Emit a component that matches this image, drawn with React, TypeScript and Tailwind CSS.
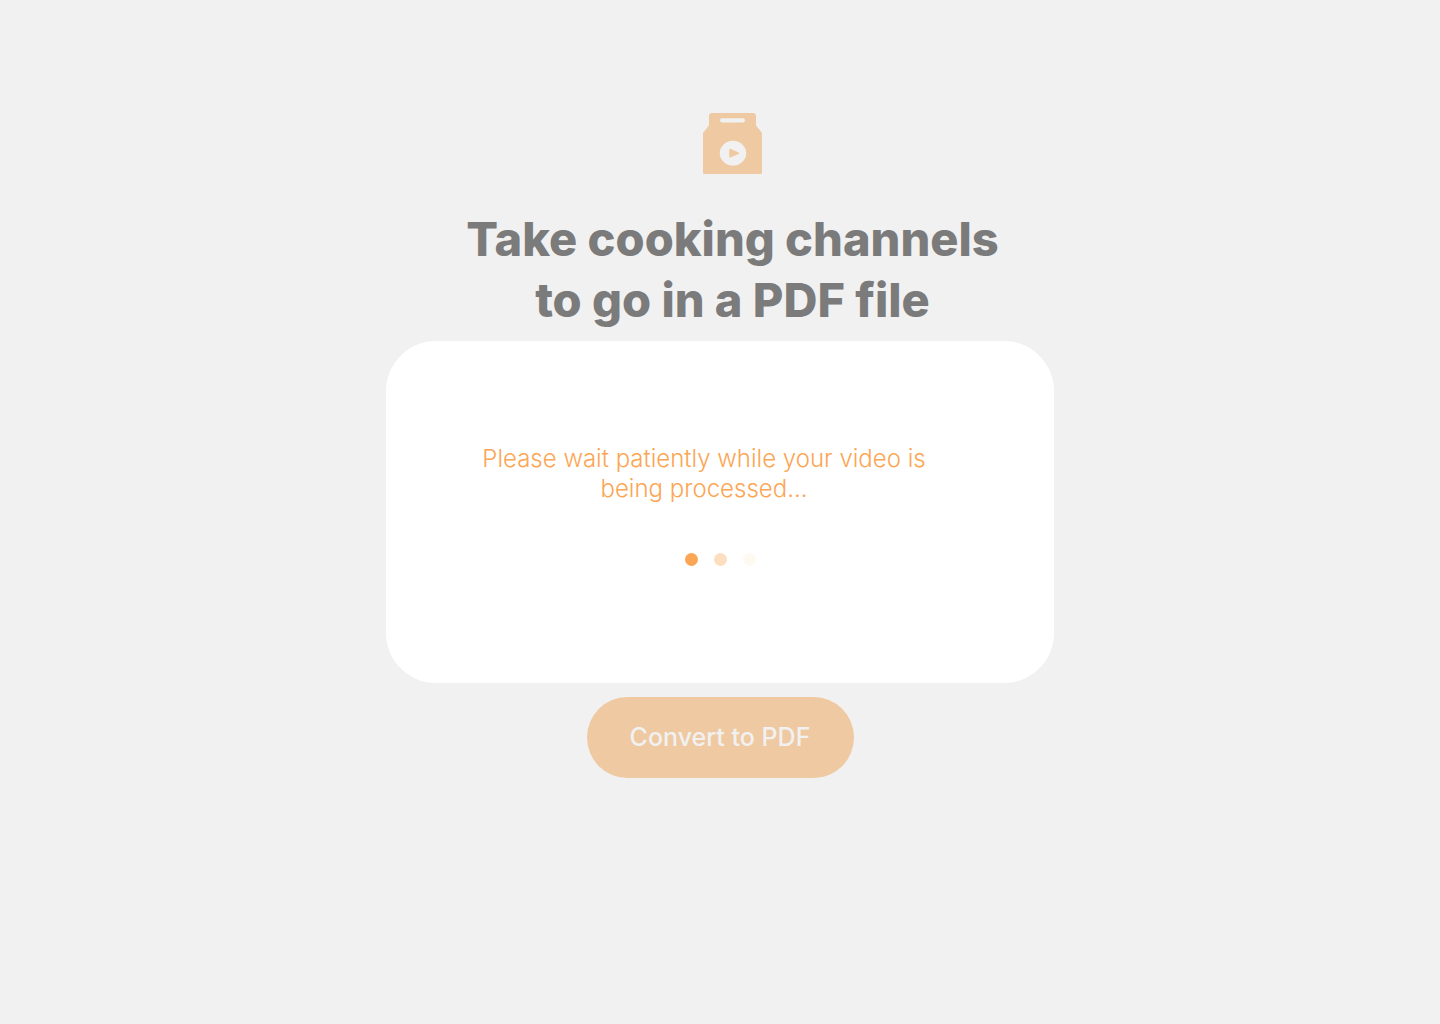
import React from 'react';

const dots = ['bg-[#fba654]', 'bg-[#fddfc0]', 'bg-[#fef9f1]'];

function TakeawayBagIcon() {
  return (
    <svg width="59" height="61" viewBox="0 0 59 61" fill="none" aria-hidden="true">
      <path
        d="M9 0h41q3 0 3 3v9.500l6 7.500v39.500q0 1.500-1.500 1.500h-56Q0 61 0 59.500V20l6-7.500V3q0-3 3-3Z"
        fill="#efc9a2"
      />
      <rect x="17" y="5.200" width="25" height="4.200" rx="2.100" fill="#f1f1f1" />
      <ellipse cx="30" cy="40.200" rx="13.200" ry="12.400" fill="#f1f1f1" />
      <path
        d="M27 36.600v7.200l8.300-3.600Z"
        fill="#efc9a2"
        stroke="#efc9a2"
        strokeWidth="1.600"
        strokeLinejoin="round"
      />
    </svg>
  );
}

function ProcessingCard() {
  return (
    <section
      role="status"
      className="mt-[11px] flex min-h-[342px] w-full max-w-[668px] flex-col items-center rounded-[50px] bg-white px-8 pt-[103px]"
    >
      <p className="pr-8 text-center text-[24px] leading-[30px] font-light text-[#fba654]">
        Please wait patiently while your video is
        <br />
        being processed...
      </p>
      <div className="mt-[49px] flex gap-4">
        {dots.map((color) => (
          <span key={color} className={`size-[13px] rounded-full ${color}`} />
        ))}
      </div>
    </section>
  );
}

export default function App() {
  return (
    <main className="flex min-h-screen flex-col items-center bg-[#f1f1f1] px-4 pt-[113px] pb-16 font-['Inter',sans-serif]">
      <header className="flex flex-col items-center pl-[25px]">
        <TakeawayBagIcon />
        <h1 className="mt-[34px] text-center text-[47px] leading-[61px] font-extrabold text-[#7b7b7b]">
          Take cooking channels
          <br />
          to go in a PDF file
        </h1>
      </header>
      <ProcessingCard />
      <button
        type="button"
        disabled
        className="mt-[14px] h-[81px] w-[267px] rounded-full bg-[#efc9a2] text-[25px] font-medium text-[#f1f1f1]"
      >
        Convert to PDF
      </button>
    </main>
  );
}
